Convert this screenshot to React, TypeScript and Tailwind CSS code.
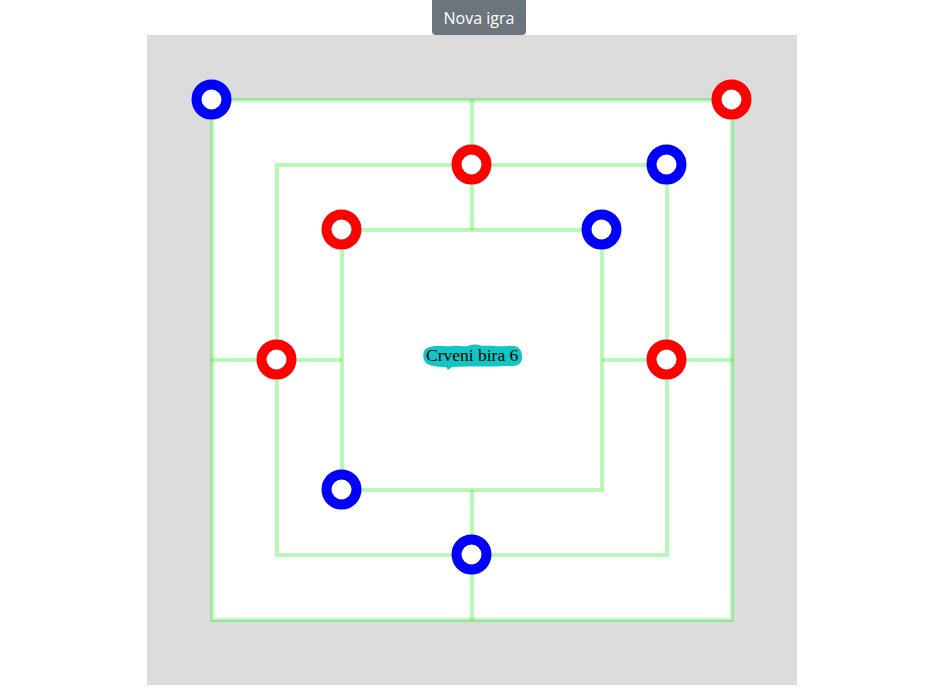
const lineColor = "rgba(0,235,0,0.28)";

const pieces: { x: number; y: number; color: string }[] = [
  { x: 65, y: 65, color: "#0000ff" },
  { x: 520, y: 130, color: "#0000ff" },
  { x: 455, y: 195, color: "#0000ff" },
  { x: 195, y: 455, color: "#0000ff" },
  { x: 325, y: 520, color: "#0000ff" },
  { x: 585, y: 65, color: "#ff0000" },
  { x: 325, y: 130, color: "#ff0000" },
  { x: 195, y: 195, color: "#ff0000" },
  { x: 130, y: 325, color: "#ff0000" },
  { x: 520, y: 325, color: "#ff0000" },
];

function Board() {
  return (
    <svg width={650} height={650} viewBox="0 0 650 650" className="block">
      <rect x={65} y={65} width={520} height={520} fill="#ffffff" />
      <g stroke={lineColor} strokeWidth={4} fill="none">
        <rect x={65} y={65} width={520} height={520} />
        <rect x={130} y={130} width={390} height={390} />
        <rect x={195} y={195} width={260} height={260} />
        <line x1={325} y1={65} x2={325} y2={195} />
        <line x1={325} y1={455} x2={325} y2={585} />
        <line x1={65} y1={325} x2={195} y2={325} />
        <line x1={455} y1={325} x2={585} y2={325} />
      </g>
      {pieces.map((p, i) => (
        <circle
          key={i}
          cx={p.x - 0.5}
          cy={p.y - 0.5}
          r={15}
          fill="#ffffff"
          stroke={p.color}
          strokeWidth={10}
        />
      ))}
    </svg>
  );
}

export default function App() {
  return (
    <div className="flex w-[948px] flex-col bg-white">
      <button
        type="button"
        className="ml-[432px] h-[35px] w-[94px] rounded-b-[4px] bg-[#6c757d] text-[16px] text-white font-['Open_Sans',sans-serif]"
      >
        Nova igra
      </button>
      <div className="relative ml-[147px] h-[650px] w-[650px] bg-[#dcdcdc]">
        <Board />
        <div className="absolute left-[275px] top-[309px]">
          <svg
            width={102}
            height={28}
            viewBox="0 0 102 28"
            className="absolute left-0 top-0"
          >
            <path
              d="M8 3 C14 1 22 3 30 2 C36 1 40 3 46 2 C50 0 56 0 60 2 C66 1 76 3 86 2 C94 1 100 4 100 12 C101 19 96 23 86 22 C70 23 50 22 30 23 L26 26 L24 23 C14 23 4 22 2 16 C0 9 2 4 8 3 Z"
              fill="#12c6c6"
            />
          </svg>
          <span className="relative block pl-[4px] pt-[0px] text-[17.5px] leading-[22px] text-black font-['Liberation_Serif',serif] whitespace-nowrap">
            Crveni bira 6
          </span>
        </div>
      </div>
    </div>
  );
}
